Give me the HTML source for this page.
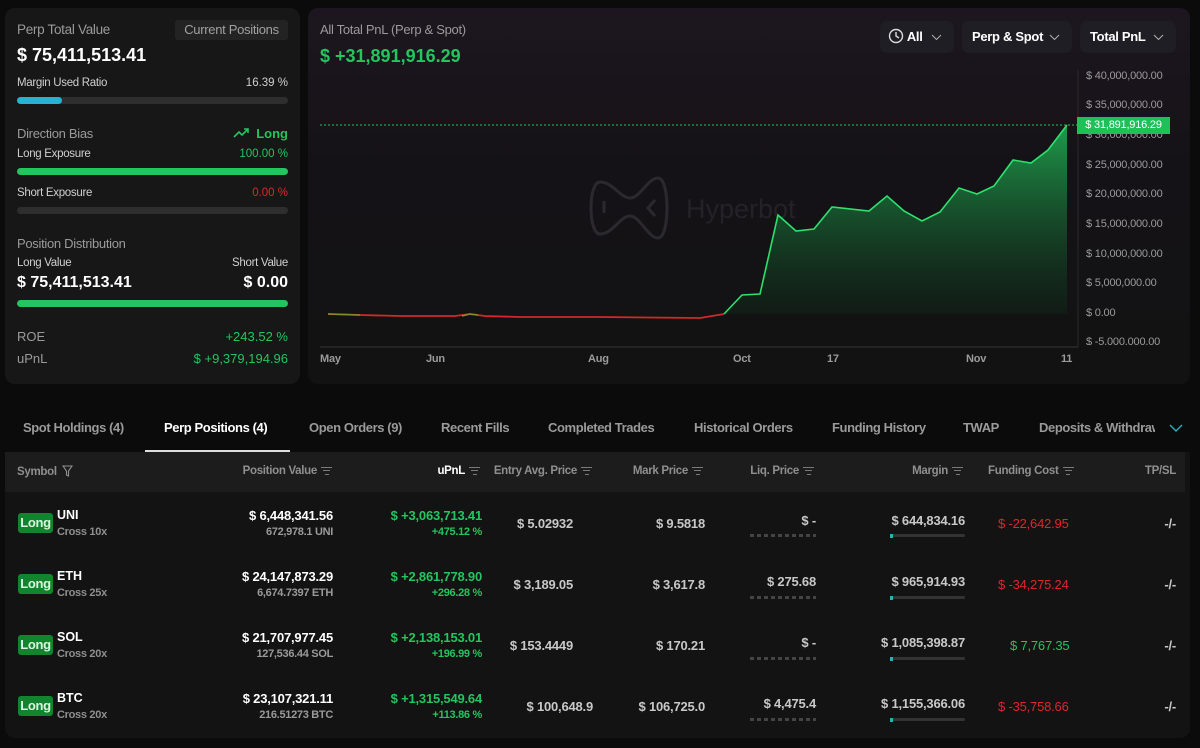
<!DOCTYPE html>
<html><head><meta charset="utf-8"><style>
*{margin:0;padding:0;box-sizing:border-box}
body{width:1200px;height:748px;background:#0b0b0b;font-family:"Liberation Sans",sans-serif;color:#fff;position:relative;overflow:hidden}
.a{position:absolute;white-space:nowrap}
.r{text-align:right}
.g{color:#23c55e}.red{color:#e0252b}.mu{color:#9a9a9a}
.bar{position:absolute;height:7px;border-radius:4px;background:#2e2e2e}
.ax{position:absolute;font-size:11px;color:#9b9b9b;white-space:nowrap;letter-spacing:-0.2px}
.tab{position:absolute;top:420px;font-size:13px;font-weight:bold;color:#9a9a9a;white-space:nowrap;letter-spacing:-0.4px}
.hd{position:absolute;top:465px;font-size:11.5px;color:#8f8f8f;white-space:nowrap;font-weight:bold;letter-spacing:-0.3px}
.fi{display:inline-block;width:11px;height:8px;margin-left:4px;vertical-align:middle;background:linear-gradient(#7a7a7a,#7a7a7a) 0 0/11px 1.3px no-repeat,linear-gradient(#7a7a7a,#7a7a7a) 2px 3.4px/7px 1.3px no-repeat,linear-gradient(#7a7a7a,#7a7a7a) 3.5px 6.7px/4px 1.3px no-repeat}
.badge{position:absolute;left:18px;width:35px;height:20px;background:#13842e;border-radius:3px;color:#d9f5df;font-size:13px;font-weight:bold;text-align:center;line-height:20px;letter-spacing:-0.3px}
.nm{position:absolute;left:57px;font-size:12.5px;font-weight:bold;color:#fff}
.sb{position:absolute;left:57px;font-size:11px;font-weight:bold;color:#8f8f8f;letter-spacing:-0.3px}
.v{position:absolute;font-size:13px;font-weight:bold;white-space:nowrap;text-align:right;letter-spacing:-0.2px}
.s{position:absolute;font-size:11px;font-weight:bold;white-space:nowrap;text-align:right;letter-spacing:-0.3px}
.dash{position:absolute;width:66px;height:3px;background:repeating-linear-gradient(90deg,#444 0 4px,transparent 4px 7px)}
.mb{position:absolute;width:75px;height:3px;background:#333;border-radius:2px}
.mb i{position:absolute;left:0;top:-0.5px;width:3px;height:4px;background:#2ab0b8}
.btn{position:absolute;top:21px;height:32px;background:#1e1e24;border-radius:7px;font-size:13px;font-weight:bold;color:#fff;line-height:32px;white-space:nowrap;letter-spacing:-0.3px}
.btn svg.c{position:absolute;right:12px;top:13px}
</style></head><body>

<div class="a" style="left:5px;top:8px;width:295px;height:376px;background:#171717;border-radius:10px"></div>
<div class="a mu" style="left:17px;top:22px;font-size:13.5px;letter-spacing:-0.3px">Perp Total Value</div>
<div class="a" style="left:175px;top:20px;width:113px;height:20px;background:#232323;border-radius:3px;color:#a0a0a0;font-size:13px;text-align:center;line-height:20px;letter-spacing:-0.3px">Current Positions</div>
<div class="a" style="left:17px;top:45px;font-size:18px;font-weight:bold">$ 75,411,513.41</div>
<div class="a" style="left:17px;top:77px;font-size:11.5px;color:#cfcfcf;letter-spacing:-0.3px">Margin Used Ratio</div>
<div class="a r" style="right:912px;top:77px;font-size:11.5px;color:#cfcfcf">16.39 %</div>
<div class="bar" style="left:17px;top:97px;width:271px"></div>
<div class="bar" style="left:17px;top:97px;width:45px;background:#26b3cf"></div>
<div class="a mu" style="left:17px;top:126px;font-size:13px;letter-spacing:-0.3px">Direction Bias</div>
<div class="a g" style="right:912px;top:126px;font-size:13px;font-weight:bold"><svg width="18" height="10" viewBox="0 0 18 10" style="margin-right:5px"><path d="M1 9 L6 4 L9 7 L15 1 M11 1 H15 V5" stroke="#23c55e" stroke-width="1.6" fill="none"/></svg>Long</div>
<div class="a" style="left:17px;top:148px;font-size:11.5px;color:#cfcfcf;letter-spacing:-0.3px">Long Exposure</div>
<div class="a r g" style="right:912px;top:148px;font-size:11.5px">100.00 %</div>
<div class="bar" style="left:17px;top:168px;width:271px;background:#22c55e"></div>
<div class="a" style="left:17px;top:187px;font-size:11.5px;color:#cfcfcf;letter-spacing:-0.3px">Short Exposure</div>
<div class="a r red" style="right:912px;top:187px;font-size:11.5px">0.00 %</div>
<div class="bar" style="left:17px;top:207px;width:271px"></div>
<div class="a mu" style="left:17px;top:236px;font-size:13px;letter-spacing:-0.3px">Position Distribution</div>
<div class="a" style="left:17px;top:257px;font-size:11.5px;color:#cfcfcf;letter-spacing:-0.3px">Long Value</div>
<div class="a r" style="right:912px;top:257px;font-size:11.5px;color:#cfcfcf;letter-spacing:-0.3px">Short Value</div>
<div class="a" style="left:17px;top:274px;font-size:16px;font-weight:bold">$ 75,411,513.41</div>
<div class="a r" style="right:912px;top:274px;font-size:16px;font-weight:bold">$ 0.00</div>
<div class="bar" style="left:17px;top:300px;width:271px;background:#22c55e"></div>
<div class="a mu" style="left:17px;top:329px;font-size:13px">ROE</div>
<div class="a r g" style="right:912px;top:329px;font-size:13px">+243.52 %</div>
<div class="a mu" style="left:17px;top:351px;font-size:13px">uPnL</div>
<div class="a r g" style="right:912px;top:351px;font-size:13px">$ +9,379,194.96</div>

<div class="a" style="left:308px;top:8px;width:882px;height:376px;border-radius:10px;background:linear-gradient(180deg,#1d1620 0%,#141216 45%,#121212 100%)"></div>
<div class="a mu" style="left:320px;top:22px;font-size:13px;letter-spacing:-0.3px">All Total PnL (Perp &amp; Spot)</div>
<div class="a g" style="left:320px;top:46px;font-size:18px;font-weight:bold">$ +31,891,916.29</div>
<div class="btn" style="left:880px;width:74px;padding-left:8px"><svg width="16" height="16" viewBox="0 0 16 16" style="vertical-align:-3px"><circle cx="8" cy="8" r="6.5" stroke="#ddd" stroke-width="1.4" fill="none"/><path d="M8 4 V8 L11 10" stroke="#ddd" stroke-width="1.4" fill="none"/></svg> All<svg class="c" width="11" height="7"><path d="M1 1 L5.5 5.5 L10 1" stroke="#aaa" stroke-width="1.1" fill="none"/></svg></div>
<div class="btn" style="left:962px;width:110px;padding-left:10px">Perp &amp; Spot<svg class="c" width="11" height="7"><path d="M1 1 L5.5 5.5 L10 1" stroke="#aaa" stroke-width="1.1" fill="none"/></svg></div>
<div class="btn" style="left:1080px;width:96px;padding-left:10px">Total PnL<svg class="c" width="11" height="7"><path d="M1 1 L5.5 5.5 L10 1" stroke="#aaa" stroke-width="1.1" fill="none"/></svg></div>

<svg class="a" style="left:0;top:0" width="1200" height="390">
<defs><linearGradient id="gg" x1="0" y1="0" x2="0" y2="1"><stop offset="0" stop-color="#1f9c4c"/><stop offset="1" stop-color="#0f2a18" stop-opacity="0.4"/></linearGradient></defs>
<g stroke="#2a2a2e" stroke-width="3" fill="none">
<path d="M600 182 C588 182 588 234 600 234 C613 234 620 216 630 216 C640 216 648 238 658 238 C670 238 670 178 658 178 C648 178 640 198 630 198 C620 198 613 182 600 182 Z"/>
<path d="M604 201 V213 M655 200 L648 208 L655 216"/>
</g>
<text x="686" y="218" font-family="Liberation Sans" font-size="27" fill="#232327">Hyperbot</text>
<line x1="1078" y1="70" x2="1078" y2="347" stroke="#2a2a2a"/>
<line x1="320" y1="347" x2="1078" y2="347" stroke="#2a2a2e" stroke-width="1.5"/>
<line x1="320" y1="125" x2="1078" y2="125" stroke="#22c55e" stroke-dasharray="2 2" stroke-width="1"/>
<path d="M724 314 L742 295 L760 294 L778 215 L796 231 L814 229 L832 207 L869 211 L887 196 L904 211 L922 221 L940 212 L959 188 L977 194 L994 186 L1013 160 L1031 163 L1048 150 L1067 125 L1067 314 Z" fill="url(#gg)"/>
<path d="M724 314 L742 295 L760 294 L778 215 L796 231 L814 229 L832 207 L869 211 L887 196 L904 211 L922 221 L940 212 L959 188 L977 194 L994 186 L1013 160 L1031 163 L1048 150 L1067 125" stroke="#2ee06e" stroke-width="1.6" fill="none"/>
<path d="M328 314 L360 315 L400 316 L455 316 L470 314 L485 316 L520 317 L600 317 L700 318 L712 316 L724 314" stroke="#d4262b" stroke-width="1.8" fill="none"/>
<path d="M328 314 L360 315 M462 316 L470 314 L478 315" stroke="#8a8a2a" stroke-width="1.5" fill="none"/>
</svg>
<div class="ax" style="left:1086px;top:70px">$ 40,000,000.00</div>
<div class="ax" style="left:1086px;top:99px">$ 35,000,000.00</div>
<div class="ax" style="left:1086px;top:129px">$ 30,000,000.00</div>
<div class="ax" style="left:1086px;top:159px">$ 25,000,000.00</div>
<div class="ax" style="left:1086px;top:188px">$ 20,000,000.00</div>
<div class="ax" style="left:1086px;top:218px">$ 15,000,000.00</div>
<div class="ax" style="left:1086px;top:248px">$ 10,000,000.00</div>
<div class="ax" style="left:1086px;top:277px">$ 5,000,000.00</div>
<div class="ax" style="left:1086px;top:307px">$ 0.00</div>
<div class="ax" style="left:1086px;top:336px;height:9px;overflow:hidden">$ -5,000,000.00</div>
<div class="a" style="left:1077px;top:117px;width:93px;height:17px;background:#1fbf5a;color:#fff;font-size:11px;line-height:17px;text-align:center;letter-spacing:-0.2px">$ 31,891,916.29</div>
<div class="ax" style="left:320px;top:353px;font-weight:bold">May</div>
<div class="ax" style="left:426px;top:353px;font-weight:bold">Jun</div>
<div class="ax" style="left:588px;top:353px;font-weight:bold">Aug</div>
<div class="ax" style="left:733px;top:353px;font-weight:bold">Oct</div>
<div class="ax" style="left:827px;top:353px;font-weight:bold">17</div>
<div class="ax" style="left:966px;top:353px;font-weight:bold">Nov</div>
<div class="ax" style="left:1061px;top:353px;font-weight:bold">11</div>

<div class="tab" style="left:23px">Spot Holdings (4)</div>
<div class="tab" style="left:164px;color:#fff">Perp Positions (4)</div>
<div class="a" style="left:145px;top:450px;width:145px;height:2px;background:#ddd"></div>
<div class="tab" style="left:309px">Open Orders (9)</div>
<div class="tab" style="left:441px">Recent Fills</div>
<div class="tab" style="left:548px">Completed Trades</div>
<div class="tab" style="left:694px">Historical Orders</div>
<div class="tab" style="left:832px">Funding History</div>
<div class="tab" style="left:963px">TWAP</div>
<div class="tab" style="left:1039px;width:116px;overflow:hidden">Deposits &amp; Withdrawals</div>
<svg class="a" style="left:1169px;top:424px" width="14" height="9"><path d="M1 1 L7 7 L13 1" stroke="#2ab0b8" stroke-width="1.4" fill="none"/></svg>

<div class="a" style="left:5px;top:452px;width:1185px;height:286px;background:#131313;border-radius:0 0 10px 10px"></div>
<div class="a" style="left:5px;top:452px;width:1180px;height:40px;background:#1c1c1c"></div>
<div class="hd" style="left:17px">Symbol <svg width="11" height="12" viewBox="0 0 11 12" style="vertical-align:-2px;margin-left:2px"><path d="M1 1 H10 L6.5 6 V11 L4.5 10 V6 Z" stroke="#8f8f8f" stroke-width="1.1" fill="none"/></svg></div>
<div class="hd" style="right:868px">Position Value<span class="fi"></span></div>
<div class="hd" style="right:720px;color:#fff">uPnL<span class="fi"></span></div>
<div class="hd" style="right:608px">Entry Avg. Price<span class="fi"></span></div>
<div class="hd" style="right:497px">Mark Price<span class="fi"></span></div>
<div class="hd" style="right:386px">Liq. Price<span class="fi"></span></div>
<div class="hd" style="right:237px">Margin<span class="fi"></span></div>
<div class="hd" style="left:988px">Funding Cost<span class="fi"></span></div>
<div class="hd" style="right:24px">TP/SL</div>

<div class="badge" style="top:513px">Long</div><div class="nm" style="top:508px">UNI</div><div class="sb" style="top:526px">Cross 10x</div>
<div class="v" style="right:867px;top:508px">$ 6,448,341.56</div><div class="s mu" style="right:867px;top:526px">672,978.1 UNI</div>
<div class="v g" style="right:718px;top:508px">$ +3,063,713.41</div><div class="s g" style="right:718px;top:526px">+475.12 %</div>
<div class="v" style="right:627px;top:516px;color:#c8c8c8">$ 5.02932</div>
<div class="v" style="right:495px;top:516px;color:#c8c8c8">$ 9.5818</div>
<div class="v" style="right:384px;top:513px;color:#c8c8c8">$ -</div><div class="dash" style="left:750px;top:534px"></div>
<div class="v" style="right:235px;top:513px;color:#c8c8c8">$ 644,834.16</div><div class="mb" style="left:890px;top:534px"><i></i></div>
<div class="v red" style="left:998px;top:516px;font-weight:normal">$ -22,642.95</div>
<div class="v" style="right:24px;top:516px;color:#c8c8c8">-/-</div>

<div class="badge" style="top:574px">Long</div><div class="nm" style="top:569px">ETH</div><div class="sb" style="top:587px">Cross 25x</div>
<div class="v" style="right:867px;top:569px">$ 24,147,873.29</div><div class="s mu" style="right:867px;top:587px">6,674.7397 ETH</div>
<div class="v g" style="right:718px;top:569px">$ +2,861,778.90</div><div class="s g" style="right:718px;top:587px">+296.28 %</div>
<div class="v" style="right:627px;top:577px;color:#c8c8c8">$ 3,189.05</div>
<div class="v" style="right:495px;top:577px;color:#c8c8c8">$ 3,617.8</div>
<div class="v" style="right:384px;top:574px;color:#c8c8c8">$ 275.68</div><div class="dash" style="left:750px;top:596px"></div>
<div class="v" style="right:235px;top:574px;color:#c8c8c8">$ 965,914.93</div><div class="mb" style="left:890px;top:596px"><i></i></div>
<div class="v red" style="left:998px;top:577px;font-weight:normal">$ -34,275.24</div>
<div class="v" style="right:24px;top:577px;color:#c8c8c8">-/-</div>

<div class="badge" style="top:635px">Long</div><div class="nm" style="top:630px">SOL</div><div class="sb" style="top:648px">Cross 20x</div>
<div class="v" style="right:867px;top:630px">$ 21,707,977.45</div><div class="s mu" style="right:867px;top:648px">127,536.44 SOL</div>
<div class="v g" style="right:718px;top:630px">$ +2,138,153.01</div><div class="s g" style="right:718px;top:648px">+196.99 %</div>
<div class="v" style="right:627px;top:638px;color:#c8c8c8">$ 153.4449</div>
<div class="v" style="right:495px;top:638px;color:#c8c8c8">$ 170.21</div>
<div class="v" style="right:384px;top:635px;color:#c8c8c8">$ -</div><div class="dash" style="left:750px;top:657px"></div>
<div class="v" style="right:235px;top:635px;color:#c8c8c8">$ 1,085,398.87</div><div class="mb" style="left:890px;top:657px"><i></i></div>
<div class="v g" style="left:1010px;top:638px;font-weight:normal">$ 7,767.35</div>
<div class="v" style="right:24px;top:638px;color:#c8c8c8">-/-</div>

<div class="badge" style="top:696px">Long</div><div class="nm" style="top:691px">BTC</div><div class="sb" style="top:709px">Cross 20x</div>
<div class="v" style="right:867px;top:691px">$ 23,107,321.11</div><div class="s mu" style="right:867px;top:709px">216.51273 BTC</div>
<div class="v g" style="right:718px;top:691px">$ +1,315,549.64</div><div class="s g" style="right:718px;top:709px">+113.86 %</div>
<div class="v" style="right:607px;top:699px;color:#c8c8c8">$ 100,648.9</div>
<div class="v" style="right:495px;top:699px;color:#c8c8c8">$ 106,725.0</div>
<div class="v" style="right:384px;top:696px;color:#c8c8c8">$ 4,475.4</div><div class="dash" style="left:750px;top:718px"></div>
<div class="v" style="right:235px;top:696px;color:#c8c8c8">$ 1,155,366.06</div><div class="mb" style="left:890px;top:718px"><i></i></div>
<div class="v red" style="left:998px;top:699px;font-weight:normal">$ -35,758.66</div>
<div class="v" style="right:24px;top:699px;color:#c8c8c8">-/-</div>
</body></html>
